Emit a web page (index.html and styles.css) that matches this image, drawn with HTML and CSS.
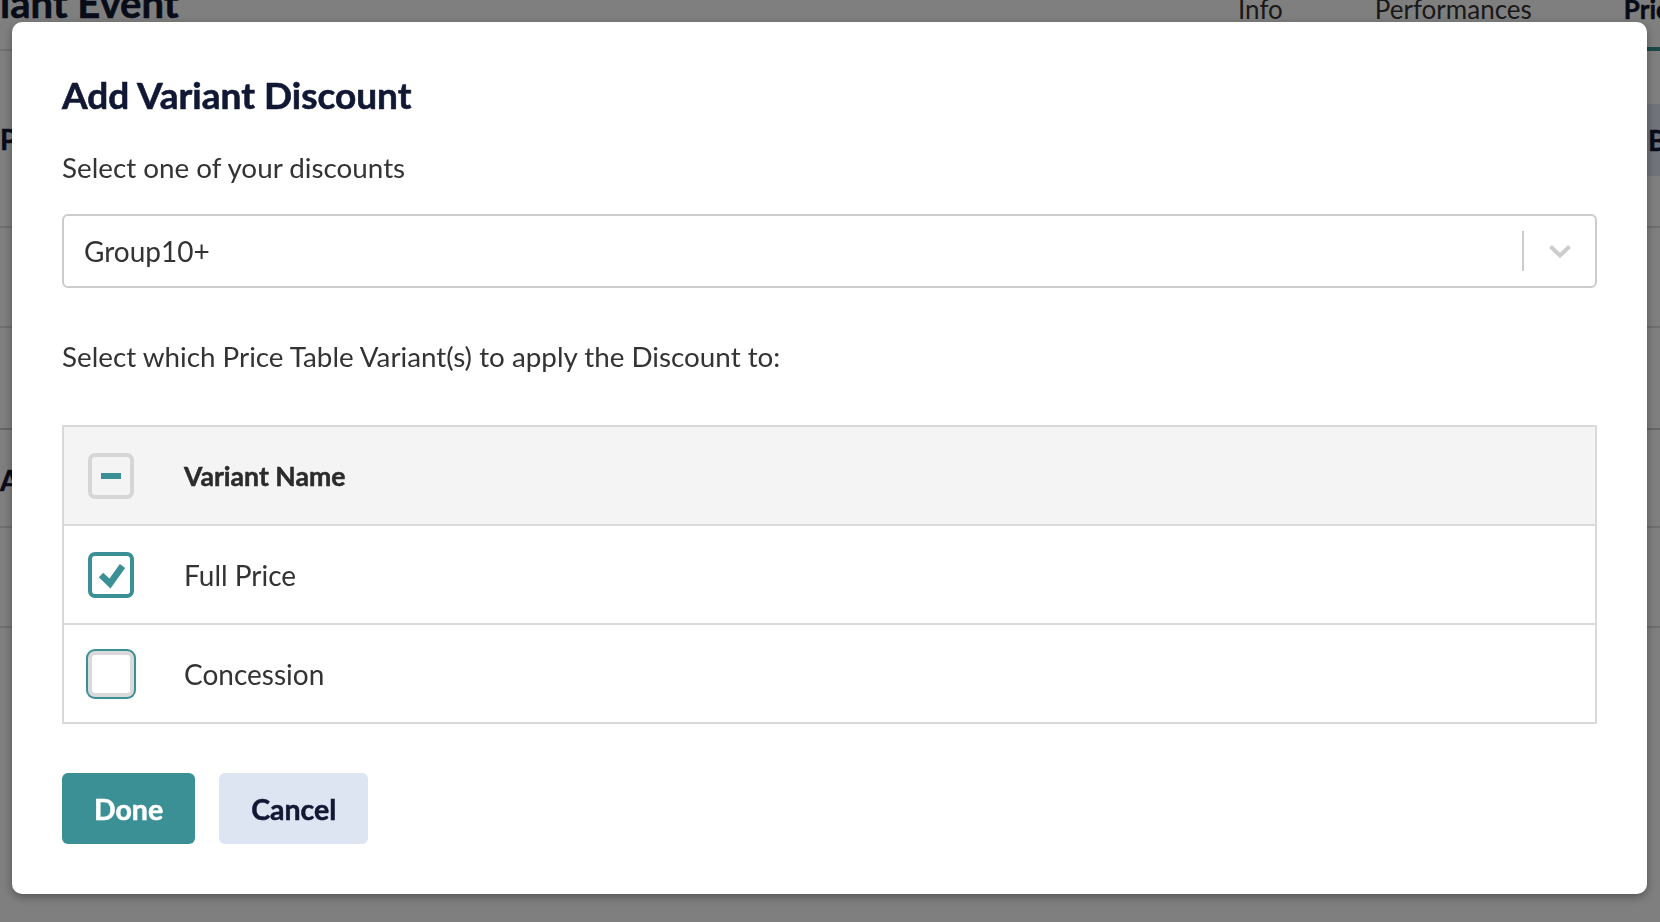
FILE: index.html
```html
<!DOCTYPE html>
<html lang="en">
<head>
    <meta charset="UTF-8">
    <meta name="viewport" content="width=device-width, initial-scale=1.0">
    <title>Add Variant Discount</title>
    <link rel="stylesheet" href="styles.css">
</head>
<body>
    <div class="page">
        <header class="page-header">
            <h1 class="page-title">iant Event</h1>
            <nav class="tabs">
                <a href="#" class="tab">Info</a>
                <a href="#" class="tab">Performances</a>
                <a href="#" class="tab active">Pricing</a>
            </nav>
        </header>

        <div class="page-rows">
            <div class="page-row row-first">
                <span class="row-label label-p">Price Tables</span>
                <div class="row-band">
                    <span class="row-label">Base Price</span>
                </div>
            </div>
            <div class="page-row row-two"></div>
            <div class="page-row row-three"></div>
            <div class="page-row row-four">
                <span class="row-label label-a">Adult</span>
            </div>
            <div class="page-row"></div>
        </div>
    </div>

    <div class="overlay">
        <div class="modal">
            <h2 class="modal-title">Add Variant Discount</h2>

            <p class="field-label">Select one of your discounts</p>
            <div class="select">
                <span class="select-value">Group10+</span>
                <span class="select-sep"></span>
                <span class="select-arrow">
                    <svg width="24" height="14" viewBox="0 0 24 14">
                        <path d="M2.5 2.5 L12 11.5 L21.5 2.5" fill="none" stroke="#cccccc" stroke-width="4"/>
                    </svg>
                </span>
            </div>

            <p class="field-label table-label">Select which Price Table Variant(s) to apply the Discount to:</p>

            <div class="variant-table">
                <div class="variant-row variant-head">
                    <span class="checkbox partial"><span class="minus"></span></span>
                    <span class="variant-name">Variant Name</span>
                </div>
                <div class="variant-row">
                    <span class="checkbox checked">
                        <svg width="38" height="38" viewBox="0 0 38 38">
                            <path d="M9 19 L18 27.5 L30.5 10" fill="none" stroke="#3a9094" stroke-width="6.5"/>
                        </svg>
                    </span>
                    <span class="variant-name">Full Price</span>
                </div>
                <div class="variant-row">
                    <span class="checkbox focused"></span>
                    <span class="variant-name">Concession</span>
                </div>
            </div>

            <div class="actions">
                <button type="button" class="btn btn-primary">Done</button>
                <button type="button" class="btn btn-secondary">Cancel</button>
            </div>
        </div>
    </div>
</body>
</html>
```

FILE: styles.css
```css
:root {
    --teal: #3a9094;
    --navy: #111833;
    --text: #333333;
    --line: #d9d9d9;
}

* {
    margin: 0;
    padding: 0;
    box-sizing: border-box;
    font-family: 'Lato', 'Liberation Sans', sans-serif;
}

body {
    background-color: #fff;
    color: var(--text);
    overflow: hidden;
}

/* page behind the dialog */
.page {
    height: 922px;
}

.page-header {
    display: flex;
    height: 51px;
    border-bottom: 2px solid #dedede;
}

.page-title {
    flex: 0 0 1192px;
    margin-top: -21px;
    font-size: 40px;
    font-weight: 700;
    line-height: 48px;
    color: var(--navy);
    white-space: nowrap;
    -webkit-text-stroke: 0.6px currentColor;
}

.tabs {
    display: flex;
    align-items: flex-end;
    margin-bottom: -2px;
}

.tab {
    padding: 0 46px 22px;
    border-bottom: 4px solid transparent;
    font-size: 26px;
    line-height: 32px;
    color: #333;
    text-decoration: none;
    white-space: nowrap;
}

.tab.active {
    font-weight: 700;
    color: var(--navy);
    border-bottom-color: var(--teal);
    -webkit-text-stroke: 0.5px currentColor;
}

.page-row {
    display: flex;
    justify-content: space-between;
    align-items: flex-start;
    height: 100px;
    border-bottom: 2px solid #dedede;
}

.row-first {
    height: 177px;
}

.row-three {
    height: 102px;
    border-bottom-color: #cccccc;
}

.row-four {
    height: 98px;
}

.row-label {
    font-size: 28px;
    font-weight: 700;
    line-height: 34px;
    color: var(--navy);
    white-space: nowrap;
    -webkit-text-stroke: 0.5px currentColor;
}

.label-p {
    margin-top: 71px;
}

.label-a {
    margin-top: 33px;
}

.row-band {
    display: flex;
    align-items: center;
    width: 380px;
    height: 72px;
    margin-top: 53px;
    padding-left: 368px;
    background-color: #e0e7f2;
    overflow: hidden;
}

/* dialog */
.overlay {
    position: fixed;
    inset: 0;
    display: flex;
    align-items: flex-start;
    padding: 22px 13px 0 12px;
    background-color: rgba(0, 0, 0, 0.5);
}

.modal {
    flex: 1;
    background-color: #fff;
    border-radius: 10px;
    padding: 51px 50px 50px;
    box-shadow: 0 3px 10px rgba(0, 0, 0, 0.35);
}

.modal-title {
    font-size: 37px;
    font-weight: 700;
    line-height: 44px;
    color: var(--navy);
    -webkit-text-stroke: 0.6px currentColor;
}

.field-label {
    margin-top: 34px;
    font-size: 27.8px;
    line-height: 34px;
}

.table-label {
    margin-top: 52px;
}

.select {
    display: flex;
    align-items: center;
    height: 74px;
    margin-top: 29px;
    border: 2px solid #cccccc;
    border-radius: 6px;
}

.select-value {
    flex: 1;
    padding-left: 20px;
    font-size: 28px;
    line-height: 34px;
}

.select-sep {
    width: 2px;
    height: 40px;
    background-color: #cccccc;
}

.select-arrow {
    display: flex;
    padding: 0 23px 0 24px;
}

.variant-table {
    margin-top: 51px;
    border: 2px solid var(--line);
}

.variant-row {
    display: flex;
    align-items: center;
    height: 97px;
    padding-left: 24px;
}

.variant-row + .variant-row {
    height: 99px;
    border-top: 2px solid var(--line);
}

.variant-head {
    background-color: #f4f4f4;
}

.checkbox {
    display: flex;
    align-items: center;
    justify-content: center;
    flex: 0 0 46px;
    height: 46px;
    margin-right: 50px;
    border: 4px solid #d6d6d6;
    border-radius: 7px;
    background-color: #fff;
}

.checkbox.partial {
    background-color: transparent;
}

.checkbox.checked {
    border-color: var(--teal);
}

.checkbox.focused {
    border-color: #dadada;
    box-shadow: 0 0 0 2px var(--teal);
}

.minus {
    width: 20px;
    height: 6px;
    background-color: var(--teal);
}

.variant-name {
    font-size: 28px;
    line-height: 34px;
}

.variant-head .variant-name {
    font-size: 26.6px;
    font-weight: 700;
    line-height: 32px;
    color: #2b2b2b;
    -webkit-text-stroke: 0.5px currentColor;
}

.actions {
    display: flex;
    gap: 24px;
    margin-top: 49px;
}

.btn {
    height: 71px;
    padding: 0 32px;
    border: none;
    border-radius: 6px;
    font-size: 28.5px;
    font-weight: 700;
    line-height: 34px;
    cursor: pointer;
    -webkit-text-stroke: 0.5px currentColor;
}

.btn-primary {
    background-color: var(--teal);
    color: #fff;
}

.btn-secondary {
    background-color: #dde4f2;
    color: var(--navy);
}
```
